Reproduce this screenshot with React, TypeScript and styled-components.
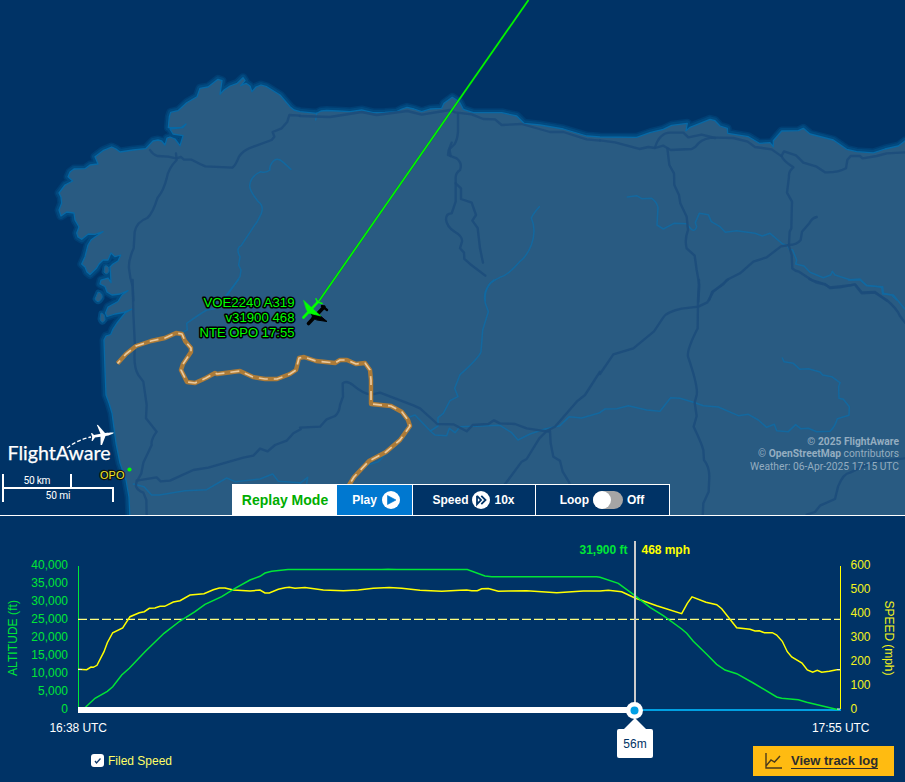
import React from 'react';
import styled, { createGlobalStyle } from 'styled-components';

const GlobalStyle = createGlobalStyle`
  * { box-sizing: border-box; }
  body { margin: 0; background: #003366; font-family: "Liberation Sans", Arial, sans-serif; overflow: hidden; }
`;

const Page = styled.main`
  width: 905px;
  height: 782px;
  display: flex;
  flex-direction: column;
  background: #003366;
`;
const MapPanel = styled.section`
  position: relative;
  height: 516px;
  flex: none;
  border-bottom: 1px solid #fff;
  overflow: hidden;
`;
const MapSvg = styled.svg`
  display: block;
`;
const Attribution = styled.div`
  position: absolute;
  right: 6px;
  top: 435.5px;
  text-align: right;
  font: 10.25px/12.5px Roboto, sans-serif;
  color: #94adc0;
`;
const ReplayBar = styled.div`
  position: absolute;
  left: 232px;
  bottom: 0;
  height: 31px;
  width: 438px;
  display: flex;
  border: 1px solid #fff;
  border-bottom: 0;
`;
const Cell = styled.div<{ $w: number; $tone?: 'title' | 'active' }>`
  width: ${p => p.$w}px;
  flex: none;
  display: flex;
  align-items: center;
  justify-content: center;
  gap: ${p => (p.$tone === 'active' ? 5 : 4)}px;
  padding-left: ${p => (p.$tone === 'active' ? 3 : 0)}px;
  padding-right: ${p => (p.$tone ? 0 : 1)}px;
  white-space: nowrap;
  color: ${p => (p.$tone === 'title' ? '#00ad00' : '#fff')};
  background: ${p => (p.$tone === 'title' ? '#fff' : p.$tone === 'active' ? '#0078d0' : '#003366')};
  border-right: ${p => (p.$tone === 'title' ? '0' : '1px solid #fff')};
  font-weight: 700;
  font-size: ${p => (p.$tone === 'title' ? 14 : 12)}px;
  &:last-child { border-right: 0; }
`;
const Toggle = styled.span`
  width: 30px;
  height: 18px;
  border-radius: 9px;
  background: #a5a5a5;
  &::before {
    content: '';
    display: block;
    width: 18px;
    height: 18px;
    border-radius: 50%;
    background: #fff;
  }
`;
const ChartPanel = styled.section`
  position: relative;
  height: 266px;
  display: flex;
  flex-direction: column;
`;
const ChartSvg = styled.svg`
  display: block;
  flex: none;
`;
const Footer = styled.footer`
  display: flex;
  align-items: center;
  justify-content: space-between;
  height: 30px;
  margin: 10px 11px 0 91px;
`;
const Check = styled.label`
  display: flex;
  align-items: center;
  gap: 4px;
  color: #ffff66;
  font-size: 12px;
`;
const Box = styled.span`
  width: 13px;
  height: 13px;
  border-radius: 3px;
  background: #fff;
  display: flex;
  align-items: center;
  justify-content: center;
  margin-top: -2px;
`;
const TrackButton = styled.button`
  width: 141px;
  height: 30px;
  border: 0;
  padding: 0 0 0 12px;
  background: #ffbb11;
  color: #2d2d2d;
  display: flex;
  align-items: center;
  gap: 8px;
  font: 700 13px "Liberation Sans", Arial, sans-serif;
  white-space: nowrap;
`;
const Underlined = styled.span`
  border-bottom: 1px solid #2d2d2d;
  line-height: 14px;
  margin-top: 1px;
`;
const TimeTip = styled.div`
  position: absolute;
  left: 617px;
  top: 213px;
  width: 36px;
  height: 29px;
  border-radius: 2px;
  background: #fff;
  color: #003366;
  font-size: 12px;
  line-height: 30px;
  text-align: center;
  &::before {
    content: '';
    position: absolute;
    left: 7px;
    top: -11px;
    border: 11px solid transparent;
    border-top: 0;
    border-bottom-color: #fff;
  }
`;

const coast =
  'M130 520L129 497 126 480 120 463 116 443 112 413 109 403 106 395 105 370 104 340 106 336 110.7 334.5 113 329 117 323 125 313 132 309 123 312.5 115 314 107 316.5 105.5 313 108 307 118 301.5 122 295 128 290.7 120 294 112 295 107 292 105 286.5 100 284 101 280 108 278 111 282.7 110.5 273 110 267 113 264 118 261 120.7 255 115 256.7 111 253 108 260 103 260 99 264 96.7 268 90 274.5 87 272 85 267 81.7 264 85 256.7 88 245 91 240 95 237 103 231.7 95 234.3 88.3 234 81.7 239.3 78 237 76.7 233 79 227 75 220 74 213 66.7 212 61 216 59 210 61.7 203 61 197 59 193 65 185 72.7 181 68 176.7 70 172 74 169 85 168.7 90 165 98 164 95 156.7 103 150.7 111.7 147 116 149 120 152 133 150 145.7 148.7 153 141 158 140 161.7 141 165 145 167 138 170 137 175 139 180 145.7 183 135.7 173 134 170 129 183 127.7 186 124 181.5 127.3 168.3 127.7 169.3 116.7 170.7 112.3 178 110.7 186.7 102.7 197 96.7 200 88.3 208 87 218 79.3 222 80.7 220 94.3 224 90 230 86 237.3 83.3 243 77.7 245 80.7 240.7 85.7 246 83.3 250 86 252 91.7 256 87 261 85 266.7 86.7 280 95 290 106.7 294 110 300 111.7 316.7 113.3 321 111 326.7 110.5 338 111 350 111.7 361.7 110 373 112.7 385 112.5 396.7 111.7 402 109 407 107.3 414 109 421.7 111.7 430 109 441.7 108.3 444 103.3 452.3 97.3 459.3 101.7 463.3 109.3 473.3 112.7 501.7 112.7 516.7 116 524 123.3 540 125 563.3 129 586.7 136 600 137 636.7 137.3 650 132.7 663.3 129.3 671.7 125.3 687.3 123.3 686 130.7 690 127.3 710 119.3 715 120.7 720 126 727.3 128.3 727.7 133.3 748.3 136.7 759.3 143.3 770 142.7 773.3 146.7 773.3 140.7 781.7 131 798.3 130.7 803.3 128.3 810 134 833.3 140 846.7 149.3 856.7 151.7 873.3 152.8 885 149 898.3 146 905 141 920 138V530Z';
const isles = ['M105 266Q109 265 109 271 107 276 104 272Z', 'M98 292Q103 293 102 298 98 305 95 299Z', 'M101 313Q105 313 105 320 102 325 100 319Z'];

interface Tile { x: number; y: number; roads: string[]; rivers: string[] }
// Line work is stored per map tile, at three units per pixel.
const tiles: Tile[] = [
  {
    x: 0, y: 60,
    roads: [
      'M450 270Q458 283 472 288L505 290 528 295 543 291 552 299 575 299 600 312 616 319 697 323Q706 318 717 290 730 270 760 260L815 240 823 230 818 216 845 205 862 185 868 165 900 167',
      'M528 280L530 300Q505 325 500 355 492 390 472 415 458 460 442 474 410 485 404 516L401 565Q385 600 387 625 390 655 398 680L400 722',
    ],
    rivers: ['M873 328L850 307Q830 288 816 308 807 320 810 330 798 340 782 335 750 350 749 378 750 395 775 425 792 438 784 460 770 490 765 494L724 556Q706 565 720 590L716 615 723 630 720 650 700 680 682 705'],
  },
  {
    x: 300, y: 60,
    roads: [
      'M0 168L90 171 185 156 230 165 322 153 365 164 450 150 465 157 515 163 550 177 585 178 605 195 665 192 750 216 790 216 860 238 900 242',
      'M474 162L474 215Q472 240 464 252L446 270 444 285 470 295Q488 310 480 330 466 340 467 355L467 425 455 460Q438 460 438 478 440 500 464 515 488 528 486 545L480 565 492 578 493 597 510 612 556 647',
      'M455 248L448 265 452 288M467 370L483 385 483 417 515 428 528 465 517 482 533 504 540 565 549 608',
    ],
    rivers: ['M718 440Q700 460 694 474 710 510 694 555 680 590 660 604 625 645 600 652 570 666 564 680 550 700 555 722', 'M47 180L50 160'],
  },
  {
    x: 600, y: 60,
    roads: [
      'M0 241L45 247 118 267 145 261 165 264 190 257 212 270 275 267Q290 260 295 250 315 232 350 233L400 234 443 245 465 261 515 268 545 289Q550 302 580 322 565 335 567 350L561 398 576 425 575 460 574 505 569 515 567 550',
      'M165 262Q180 215 215 218L250 218 265 232 305 224 345 234',
      'M545 287L552 274 588 286 610 308 650 320 675 337Q715 338 738 325L742 300 752 288 780 288 788 295 830 288 860 280 915 277',
      'M202 265L208 315 222 340 223 375 237 405 241 430 260 470 264 510Q253 540 260 565L284 587 290 630 298 675 295 725',
      'M650 471Q636 474 628 490L606 515 602 540Q590 555 567 555L543 559 500 592 460 605 420 640 380 660 370 673 336 696 328 720',
      'M566 555L575 585 577 625Q585 633 597 635L635 660 675 672 690 684 720 682 765 673 785 697 825 696 860 722',
    ],
    rivers: ['M82 411L110 407 125 416 155 415Q170 425 174 442L171 495 190 507 222 490 260 491 275 509Q286 515 290 500L286 488 298 460 325 464 334 485 360 500 376 517 410 512 465 520 487 528 510 520 548 552 562 556 568 568 578 570 590 600 587 612 612 618 630 637 670 653 692 645 697 634 705 645 750 659 780 657 800 677 848 680 850 700 875 705 890 720'],
  },
  {
    x: 0, y: 280,
    roads: [
      'M398 0L400 100 405 200Q399 260 415 285L430 305 440 375 438 415 470 455Q452 480 455 495L430 548 424 580 413 600Q397 625 430 638L439 660 440 708',
      'M410 602L470 592 482 604 510 602 580 570 625 563 730 533 760 527 780 506 803 514 825 495 860 482 880 460 902 448',
    ],
    rivers: ['M716 -2L665 64 645 86 620 90 596 105 560 130 562 150 540 160', 'M400 612L432 620 455 645 478 645 555 632 620 629 680 594 705 605 780 597 818 582 835 604 900 608'],
  },
  {
    x: 300, y: 280,
    roads: [
      'M0 443L60 440 80 418 105 408Q118 398 120 375L129 350 128 310Q140 300 160 316 188 340 213 344L240 338 340 376 360 385 412 432 460 433 500 454 518 435 565 432 582 421 600 430 645 432 680 445 745 455',
      'M900 275L855 345 830 365 765 440 740 453 718 475 680 537 665 545 620 606 600 630',
      'M750 453L752 490 760 530 780 542 788 575 808 608 812 650',
    ],
    rivers: ['M582 0Q550 22 556 70L565 95 548 150 543 215Q538 232 480 284L464 325 474 350 450 362 430 400 414 413 414 438 391 453 405 465 440 467 448 445 465 458 480 440 600 436 635 458 654 480 690 462 735 447 780 437 808 410 845 414 900 398', 'M330 410L345 405 391 453M0 610L23 592 20 610M260 520L235 545 200 556'],
  },
  {
    x: 600, y: 280,
    roads: [
      'M384 -1L340 35 322 67 295 80 245 86Q200 96 190 112L162 154 100 205 40 223 0 282',
      'M297 0L294 60 293 145Q260 210 264 230 295 320 290 345L284 368 290 408 281 440Q305 490 310 510L312 540Q328 560 328 590L326 635 310 670 308 710',
      'M628 -3L650 8 675 14 690 22 765 14 785 40 825 38 860 60Q890 85 900 108L915 128',
      'M620 704L645 696 660 677 705 657 714 620Q730 580 750 578L820 545 915 535',
    ],
    rivers: ['M0 397L15 387 50 386 85 377 140 390 180 394 212 353 240 355 285 368 310 377 355 381 415 407 445 403 475 420 500 442 523 433 530 452 565 455 587 434 602 446 625 445 650 455 690 454Q705 440 712 416L747 406 748 380 730 358 717 355 716 320 720 308 695 290 668 285 660 276 625 266 600 268 580 250 552 245 547 234', 'M745 0L780 0 800 16 845 22 848 42 880 45 915 88'],
  },
];

const border =
  'M117.5 363.5L126 354 136 346 151 341 165 338 176 333 182 334 185 341 191 348 191 352 183 364 181 370 187 382 195 383 206 378 215 373 217 374 240 371 253 377 265 379 277 379 290 374 296 370 299 358 304 357 316 361 335 363 340 360 347 360 356 364 365 363 370 370 371 380 371 404 391 406 402 412 408 420 410 426 400 440 386 452 369 461 354 477 346 490';

const altitude =
  '78,710 85,707.7 95,698.3 107.3,691.3 112.7,686.7 121.7,675 129.3,668.3 145,651.7 164,633.3 180,621 195,611.7 205,604.3 221.7,596.7 235,588.3 250,580 260,576.3 265,573 271.7,571.3 288,569.6 381.7,569.6 388,569.2 396.7,569.6 467.3,569.6 485,576 491.7,576.7 596.7,576.7 600,577.3 618.3,583.3 635,595.7 650,607.3 663.3,615.7 681.7,629 686.7,633.3 693.3,641.3 706.7,654.3 716.7,664.3 725,670 736.7,673.7 753.3,683 776.7,697 781.7,698.3 798.3,699.7 806.7,702.3 838.3,709.7';
const speed =
  '78,669.3 86.7,669.7 91,667 93.3,667.3 97,665.3 104,651.7 107.3,642.7 112.7,632.7 122.7,628 130,616.7 139.3,612.7 144.3,611.7 149.3,608.3 155,608 160,606.3 164.7,606.3 173.3,602 180,600.7 190,595 204,593.7 213.3,589.7 219.3,588 225,588 233.3,590 250,591 260,590 265,593 269.3,593 278.3,589.3 285,587.7 289.3,587.3 295,588.3 305,587.5 323.3,590 343.3,590.7 358.3,590 373.3,588.3 389.3,587.6 401.7,588.2 420,590.3 441.7,591.3 460,590.3 466.7,589.9 471.7,590.7 477.3,590.7 481.7,588.7 488.3,588.6 498.3,591.3 508.3,591 526.7,590.7 556.7,592.7 583.3,591 600,591 608.3,590.3 621.7,591.7 635,598 656.7,605.7 681.7,613.7 687.3,603.3 692,596.9 706,602.3 716.7,604.7 721.7,608.7 736.7,627.7 750,629.3 755,631 759.3,630.7 764.3,632.7 772.3,632.7 776.7,635 782.3,641.3 787.3,651.7 791.7,657 802,663 807.3,670 812.7,672.3 817.3,670.3 821.7,672.3 829.3,671.3 836.7,669.7 840,669.7';

const FlightMap = () => (
  <MapSvg width="905" height="515" viewBox="0 0 905 515">
    <g stroke="#024a80" fill="none" strokeLinejoin="round">
      <path d={coast} strokeWidth="9" opacity=".5" />
      <path d={coast} strokeWidth="6" />
      {isles.map(d => <path key={d} d={d} strokeWidth="5" />)}
    </g>
    <path d={coast} fill="#295b82" stroke="#0769a6" strokeWidth="1.3" strokeLinejoin="round" />
    {isles.map(d => <path key={d} d={d} fill="#295b82" stroke="#07659f" />)}
    {tiles.map(t => (
      <g key={`${t.x}-${t.y}`} transform={`translate(${t.x} ${t.y}) scale(.33333)`} fill="none" strokeLinejoin="round" strokeLinecap="round">
        {t.rivers.map(d => <path key={d} d={d} stroke="#1169a2" strokeWidth="4.6" opacity=".9" />)}
        {t.roads.map(d => <path key={d} d={d} stroke="#1c4d7b" strokeWidth="7" opacity=".9" />)}
      </g>
    ))}
    <g fill="none" strokeLinejoin="round">
      <path d={border} stroke="#ac7b38" strokeWidth="4.4" />
      <path d={border} stroke="#ebc99b" strokeWidth="1.7" strokeDasharray="9 6" strokeDashoffset="5" />
    </g>
    <path d="M528.5 0L319 301" stroke="#063" strokeWidth="2.4" opacity=".5" />
    <path d="M528.5 0L319 301" stroke="#00f500" strokeWidth="1.7" />
    <g fill="none" stroke="#000" strokeLinecap="round">
      <path d="M308.5 323.5L324 307" strokeWidth="3.6" />
      <path d="M322 306L327 310M309 309L314 317" strokeWidth="2.4" />
      <path d="M312 317L318 314 327 321.5 317 320Z" fill="#000" strokeWidth="1" />
    </g>
    <g fill="#00ff00" stroke="#00ff00" strokeLinecap="round">
      <path d="M303.4 317.5L318 301.8" strokeWidth="2.6" />
      <path d="M316 298.8L317.5 302 322 303.5" fill="none" strokeWidth="1.5" />
      <path d="M303.8 300.6L312.5 308.5 320.7 316 309 313.2 306.6 310Z" strokeWidth=".6" />
    </g>
    <g fontSize="13" textAnchor="end" fill="#00ff00" stroke="#000" strokeWidth="3" strokeLinejoin="round" paintOrder="stroke">
      <text x="294.5" y="307" textLength="91" lengthAdjust="spacingAndGlyphs">VOE2240 A319</text>
      <text x="294.5" y="322" textLength="69" lengthAdjust="spacingAndGlyphs">v31900 468</text>
      <text x="294.5" y="337" textLength="95" lengthAdjust="spacingAndGlyphs">NTE OPO 17:55</text>
    </g>
    <text x="100" y="479" fontSize="11" fill="#f0e82c" stroke="#111" strokeWidth="2.4" paintOrder="stroke" textLength="24.5">OPO</text>
    <circle cx="129.5" cy="469.5" r="2.1" fill="#00ff00" />
    <text x="7.5" y="460.3" fontFamily="Lato, sans-serif" fontSize="20" fill="#fff" stroke="#fff" strokeWidth=".25" textLength="103" lengthAdjust="spacingAndGlyphs">FlightAware</text>
    <path d="M67 448Q77 440 91 437" fill="none" stroke="#fff" strokeWidth="1.3" strokeDasharray="4 2" />
    <path d="M114 432.7C112 432.2 110 432.4 105 433L98 425 96.8 424.8 100.5 433.8 94 435 92 433 91 433.2 92.2 436.8 91.6 441 92.6 441 95 437.4 100.5 436.8 100.6 445 102 445 105.5 436Q112 434.8 114 432.7Z" fill="#fff" />
    <path d="M3 474V502M3 488H113M113 487V502M71 474V488" fill="none" stroke="#fff" strokeWidth="2" />
    <g fontFamily="Roboto, sans-serif" fontSize="10.2" fill="#fff" textAnchor="middle">
      <text x="37" y="484" textLength="27">50 km</text>
      <text x="58" y="499" textLength="25">50 mi</text>
    </g>
  </MapSvg>
);

const FlightChart = () => (
  <ChartSvg width="905" height="220" viewBox="0 516 905 220" fontSize="12">
    <g fill="#00e636" textAnchor="end">
      {['40,000', '35,000', '30,000', '25,000', '20,000', '15,000', '10,000', '5,000', '0'].map((v, i) => (
        <text key={v} x="68" y={569 + i * 18}>{v}</text>
      ))}
    </g>
    <g fill="#f4f41c">
      {[600, 500, 400, 300, 200, 100, 0].map((v, i) => (
        <text key={v} x="850.5" y={569 + i * 24}>{v}</text>
      ))}
    </g>
    <text transform="translate(17 638) rotate(-90)" textAnchor="middle" fill="#00e636" textLength="76">ALTITUDE (ft)</text>
    <text transform="translate(885 638) rotate(90)" textAnchor="middle" fill="#f4f41c" textLength="75">SPEED (mph)</text>
    <path d="M78.5 566V710" stroke="#00e636" />
    <path d="M840.5 566V711" stroke="#ffff00" />
    <path d="M78 619.4H840" stroke="#ffff80" strokeWidth="1.4" strokeDasharray="9 3" />
    <path d="M635 710H841" stroke="#00a0e2" strokeWidth="2" />
    <polyline points={speed} fill="none" stroke="#ffff00" strokeWidth="1.5" />
    <polyline points={altitude} fill="none" stroke="#00e636" strokeWidth="1.5" />
    <path d="M78 669.5H82M837 669.5H840M837 709H840" stroke="#eee" />
    <path d="M78 710H635" stroke="#fff" strokeWidth="6" />
    <path d="M635 541V710" stroke="#ccc" strokeWidth="2" />
    <circle cx="634.5" cy="710.5" r="8.5" fill="#fff" />
    <circle cx="634.5" cy="710.5" r="4" fill="#009fe5" />
    <g fontWeight="700">
      <text x="627.5" y="554" textAnchor="end" fill="#00e636" textLength="48">31,900 ft</text>
      <text x="641.5" y="554" fill="#ffff00" textLength="48.5">468 mph</text>
    </g>
    <g fill="#fff">
      <text x="49.5" y="732" textLength="57.5">16:38 UTC</text>
      <text x="812" y="732" textLength="57.5">17:55 UTC</text>
    </g>
  </ChartSvg>
);

const PlayIcon = () => (
  <svg width="18" height="18" viewBox="0 0 18 18">
    <circle cx="9" cy="9" r="9" fill="#fff" />
    <path d="M5.5 4.5L14 9 5.5 13.5Z" fill="#0078d0" stroke="#0078d0" strokeWidth=".6" />
  </svg>
);
const SpeedIcon = () => (
  <svg width="18" height="18" viewBox="0 0 18 18">
    <circle cx="9" cy="9" r="9" fill="#fff" />
    <path d="M5 4.8L9 9 5 13.2V4.8M9.3 4.8L13.5 9 9.3 13.2" fill="none" stroke="#003366" strokeWidth="1.8" />
  </svg>
);

export default function App() {
  return (
    <Page>
      <GlobalStyle />
      <MapPanel>
        <FlightMap />
        <Attribution>
          <div><b>© 2025 FlightAware</b></div>
          <div>© <b>OpenStreetMap</b> contributors</div>
          <div>Weather: 06-Apr-2025 17:15 UTC</div>
        </Attribution>
        <ReplayBar>
          <Cell $w={104} $tone="title">Replay Mode</Cell>
          <Cell $w={76} $tone="active">Play <PlayIcon /></Cell>
          <Cell $w={123}>Speed <SpeedIcon /> 10x</Cell>
          <Cell $w={133}>Loop <Toggle /> Off</Cell>
        </ReplayBar>
      </MapPanel>
      <ChartPanel>
        <FlightChart />
        <TimeTip>56m</TimeTip>
        <Footer>
          <Check>
            <Box>
              <svg width="9" height="9" viewBox="0 0 9 9"><path d="M2 5L3.5 7 7.5 2.5" fill="none" stroke="#123b6b" strokeWidth="1.3" /></svg>
            </Box>
            Filed Speed
          </Check>
          <TrackButton>
            <svg width="18" height="16" viewBox="0 0 18 16"><path d="M1 0V15H17M1 13L6 7 9.5 9 15 3" fill="none" stroke="#4c3b1b" strokeWidth="1.4" /></svg>
            <Underlined>View track log</Underlined>
          </TrackButton>
        </Footer>
      </ChartPanel>
    </Page>
  );
}
